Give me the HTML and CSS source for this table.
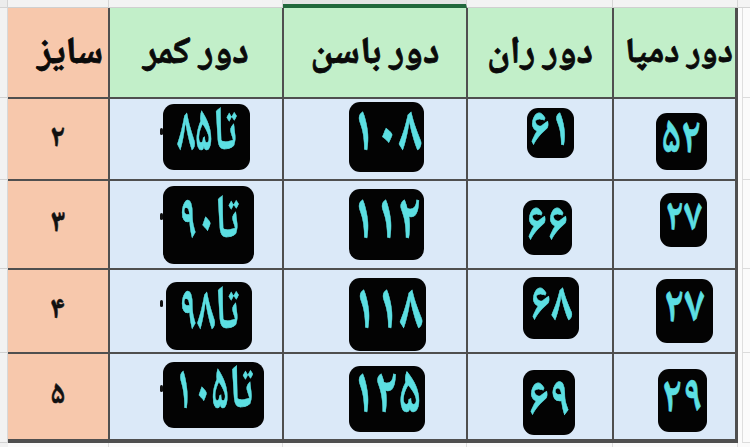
FILE: index.html
```html
<!DOCTYPE html>
<html lang="fa">
<head>
<meta charset="utf-8">
<title>جدول سایز</title>
<link rel="stylesheet" href="styles.css">
</head>
<body>
<div class="sheet">
  <div class="corner"></div>
  <div class="colheads">
    <div class="ch"></div>
    <div class="ch"></div>
    <div class="ch ch-sel"></div>
    <div class="ch"></div>
    <div class="ch"></div>
  </div>
  <div class="corner corner-r"></div>

  <div class="rowheads">
    <div class="rh"></div>
    <div class="rh"></div>
    <div class="rh"></div>
    <div class="rh"></div>
    <div class="rh"></div>
  </div>

  <div class="grid">
    <div class="cell size head"><span class="htxt">سایز</span></div>
    <div class="cell hd"><span class="htxt">دور کمر</span></div>
    <div class="cell hd"><span class="htxt">دور باسن</span></div>
    <div class="cell hd"><span class="htxt">دور ران</span></div>
    <div class="cell hd hd-end"><span class="htxt">دور دمپا</span></div>

    <div class="cell size r1"><span class="num">۲</span></div>
    <div class="cell body kamar r1"><span class="tag"><span class="tt">تا۸۵</span></span></div>
    <div class="cell body basen r1"><span class="tag"><span class="tt">۱۰۸</span></span></div>
    <div class="cell body ran r1"><span class="tag"><span class="tt">۶۱</span></span></div>
    <div class="cell body dampa r1"><span class="tag"><span class="tt">۵۲</span></span></div>

    <div class="cell size r2"><span class="num">۳</span></div>
    <div class="cell body kamar r2"><span class="tag"><span class="tt">تا۹۰</span></span></div>
    <div class="cell body basen r2"><span class="tag"><span class="tt">۱۱۲</span></span></div>
    <div class="cell body ran r2"><span class="tag"><span class="tt">۶۶</span></span></div>
    <div class="cell body dampa r2"><span class="tag"><span class="tt">۲۷</span></span></div>

    <div class="cell size r3"><span class="num">۴</span></div>
    <div class="cell body kamar r3"><span class="tag"><span class="tt">تا۹۸</span></span></div>
    <div class="cell body basen r3"><span class="tag"><span class="tt">۱۱۸</span></span></div>
    <div class="cell body ran r3"><span class="tag"><span class="tt">۶۸</span></span></div>
    <div class="cell body dampa r3"><span class="tag"><span class="tt">۲۷</span></span></div>

    <div class="cell size r4"><span class="num">۵</span></div>
    <div class="cell body kamar r4"><span class="tag"><span class="tt">تا۱۰۵</span></span></div>
    <div class="cell body basen r4"><span class="tag"><span class="tt">۱۲۵</span></span></div>
    <div class="cell body ran r4"><span class="tag"><span class="tt">۶۹</span></span></div>
    <div class="cell body dampa r4"><span class="tag"><span class="tt">۲۹</span></span></div>
  </div>

  <div class="rightstrip">
    <div class="rs"></div>
    <div class="rs"></div>
    <div class="rs"></div>
    <div class="rs"></div>
    <div class="rs"></div>
  </div>

  <div class="bl"></div>
  <div class="bottomstrip">
    <div class="bs"></div>
    <div class="bs"></div>
    <div class="bs"></div>
    <div class="bs"></div>
    <div class="bs"></div>
  </div>
  <div class="br"></div>
</div>
</body>
</html>
```

FILE: styles.css
```css
* { box-sizing: border-box; }
html, body { margin: 0; padding: 0; background: #ffffff; }
body {
  width: 750px;
  height: 447px;
  overflow: hidden;
  font-family: "Noto Naskh Arabic", "Noto Sans Arabic", "Vazirmatn", "DejaVu Sans", sans-serif;
}

.sheet {
  display: grid;
  grid-template-columns: 8px 730px 12px;
  grid-template-rows: 8px 435px 4px;
  width: 750px;
  height: 447px;
}

.corner { background: #ececec; border-bottom: 1px solid #d4d4d4; border-right: 1px solid #d4d4d4; }
.corner-r { background: #f4f4f4; border-right: none; }

.colheads {
  display: grid;
  grid-template-columns: 101px 174px 184px 146px 125px;
  background: #f3f3f3;
}
.ch { border-right: 1px solid #d6d6d6; border-bottom: 1px solid #d0d0d0; }
.ch-sel { border-bottom: 4px solid #22683c; background: #e4e4e4; }

.rowheads {
  display: grid;
  grid-template-rows: 90px 82px 89px 84px 90px;
  background: #f2f2f2;
  border-right: 1px solid #d8d8d8;
}
.rh { border-bottom: 1px solid #d2d2d2; }

.rightstrip {
  display: grid;
  grid-template-rows: 90px 82px 89px 84px 90px;
  background: #fbfbfb;
  padding-left: 4px;
}
.rs { border-bottom: 1px solid #dcdcdc; border-left: 1px solid #dedede; }

.bl { background: #f2f2f2; }
.br { background: #fbfbfb; }
.bottomstrip {
  display: grid;
  grid-template-columns: 101px 174px 184px 146px 125px;
  background: #fbfbfb;
}
.bs { border-right: 1px solid #dedede; }

.grid {
  display: grid;
  grid-template-columns: 100px 172px 182px 144px 121px;
  grid-template-rows: 89px 80px 87px 82px 85px;
  gap: 2px;
  padding: 0 3px 4px 0;
  background: #4f4f4f;
}

.cell { display: flex; align-items: center; min-width: 0; }
.size { background: #f7c8ac; justify-content: center; }
.hd { background: #c2efc9; justify-content: center; }
.body { background: #dbe9f8; justify-content: flex-start; }

.htxt {
  direction: rtl;
  font-weight: bold;
  font-size: 38px;
  color: #0a0a0a;
  line-height: 1;
  white-space: nowrap;
  margin-top: 4px;
  -webkit-text-stroke: 0.8px #0a0a0a;
}
.size.head { justify-content: flex-end; padding-right: 5px; }
.hd-end { justify-content: flex-end; padding-right: 2px; }
.hd-end .htxt { font-size: 35px; }

.num {
  font-weight: bold;
  font-size: 31px;
  color: #111;
  line-height: 1;
  -webkit-text-stroke: 0.5px #111;
}

.tag {
  display: flex;
  align-items: center;
  justify-content: center;
  background: #030303;
  color: #5cdfe2;
  border-radius: 11px;
  font-weight: bold;
  line-height: 1;
  white-space: nowrap;
}
.tt {
  display: inline-block;
  direction: rtl;
  font-size: 64px;
  transform: scaleX(0.74);
  -webkit-text-stroke: 0.6px #5cdfe2;
}

/* column offsets */
.kamar { padding-left: 50px; }
.kamar::before {
  content: "";
  width: 3px;
  height: 7px;
  background: #111;
  border-radius: 2px;
  margin-bottom: 16px;
}
.basen { padding-left: 65px; }
.ran { padding-left: 55px; }
.dampa { padding-left: 42px; }

.kamar .tt { font-size: 62px; transform: scaleX(0.6); }
.ran .tt { font-size: 54px; transform: scaleX(0.8); }
.dampa .tt { font-size: 50px; transform: scaleX(0.82); }
.dampa.r2 .tt { font-size: 45px; }

/* box sizes */
.kamar.r1 .tag { width: 87px; height: 66px; margin-bottom: 4px; }
.kamar.r2 .tag { width: 91px; height: 78px; }
.kamar.r3 .tag { width: 86px; height: 68px; margin-left: 3px; margin-top: 10px; }
.kamar.r4 .tag { width: 101px; height: 66px; margin-bottom: 3px; }

.basen.r1 .tag { width: 75px; height: 70px; margin-bottom: 4px; }
.basen.r2 .tag { width: 75px; height: 71px; }
.basen.r3 .tag { width: 77px; height: 73px; margin-top: 7px; }
.basen.r4 .tag { width: 76px; height: 66px; margin-top: 5px; }

.ran.r1 .tag { width: 47px; height: 50px; margin-left: 4px; margin-bottom: 12px; }
.ran.r2 .tag { width: 49px; height: 55px; margin-top: 6px; }
.ran.r3 .tag { width: 56px; height: 62px; margin-bottom: 6px; }
.ran.r4 .tag { width: 52px; height: 65px; margin-top: 12px; }

.dampa.r1 .tag { width: 51px; height: 57px; margin-top: 5px; }
.dampa.r2 .tag { width: 47px; height: 54px; margin-left: 4px; margin-bottom: 9px; }
.dampa.r3 .tag { width: 57px; height: 64px; }
.dampa.r4 .tag { width: 49px; height: 63px; margin-left: 2px; margin-top: 8px; }
```
